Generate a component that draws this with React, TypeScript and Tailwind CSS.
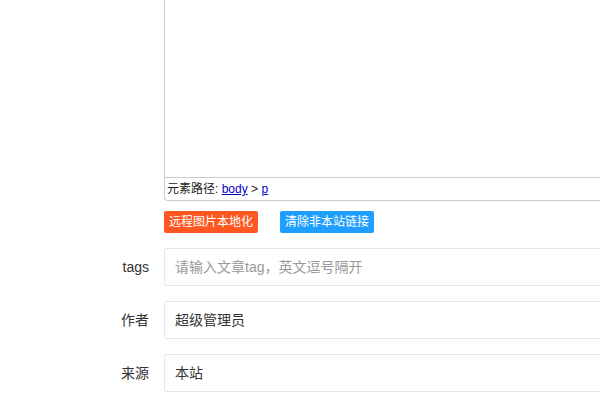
export default function App() {
  const font = { fontFamily: '"Liberation Sans","Noto Sans CJK SC",sans-serif' };
  const Row = ({ label, value, ph }: { label: string; value?: string; ph?: string }) => (
    <div className="flex items-center h-[38px] mb-[15px]">
      <div className="w-[149px] text-right pr-0 text-[14px] text-[#333]">{label}</div>
      <div className="ml-[15px] flex-1 h-[38px] border border-[#e6e6e6] rounded-[2px] bg-white flex items-center pl-[10px] text-[14px]">
        {value ? <span className="text-[#333]">{value}</span> : <span className="text-[#999]">{ph}</span>}
      </div>
    </div>
  );
  return (
    <div style={font} className="w-[600px] h-[400px] overflow-hidden bg-white">
      <div className="ml-[164px] w-[450px] h-[201px] border border-[#ccc] border-t-0 rounded-b-[4px] flex flex-col">
        <div className="flex-1" />
        <div className="h-[23px] border-t border-[#ccc] text-[12px] text-[#222] flex items-center pl-[2px]">
          元素路径:&nbsp;<span className="text-[#00c] underline">body</span>&nbsp;&gt;&nbsp;<span className="text-[#00c] underline">p</span>
        </div>
      </div>
      <div className="ml-[164px] mt-[10px] flex gap-[22px]">
        <div className="w-[94px] h-[22px] bg-[#FF5722] text-white text-[12px] rounded-[2px] flex items-center justify-center">远程图片本地化</div>
        <div className="w-[94px] h-[22px] bg-[#1E9FFF] text-white text-[12px] rounded-[2px] flex items-center justify-center">清除非本站链接</div>
      </div>
      <div className="mt-[15px] mr-[-20px]">
        <Row label="tags" ph="请输入文章tag，英文逗号隔开" />
        <Row label="作者" value="超级管理员" />
        <Row label="来源" value="本站" />
      </div>
    </div>
  );
}
